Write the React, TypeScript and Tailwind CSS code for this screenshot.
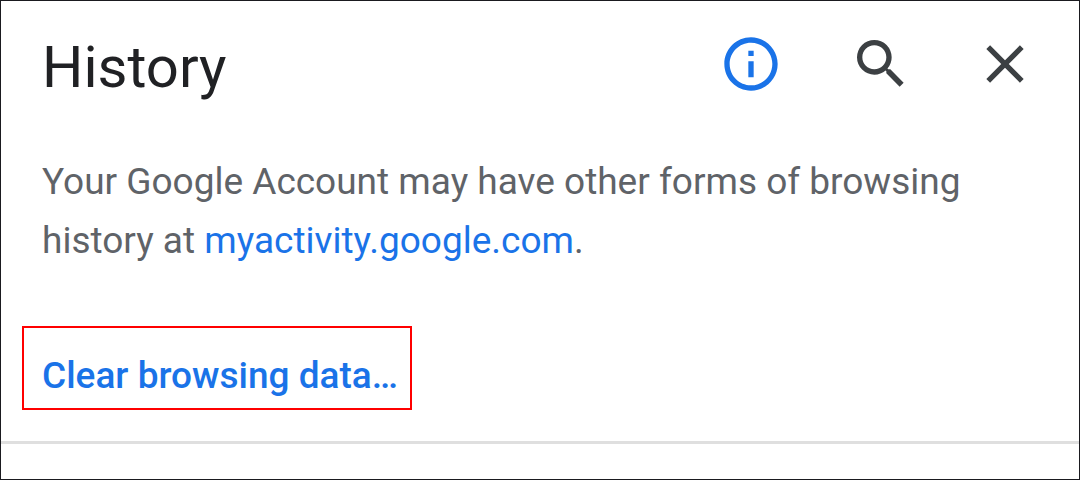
import React from 'react';
import { MdClose, MdInfoOutline, MdSearch } from 'react-icons/md';

interface IconButtonProps {
  label: string;
  className?: string;
  children: React.ReactNode;
}

const IconButton: React.FC<IconButtonProps> = ({ label, className = '', children }) => {
  return (
    <button type="button" aria-label={label} className={`cursor-pointer ${className}`}>
      {children}
    </button>
  );
};

const App: React.FC = () => {
  return (
    <main className="min-h-screen border border-[#1a1a1f] bg-white font-['Roboto',sans-serif]">
      <header className="flex items-start justify-between pt-7 pr-[42px] pl-[41px]">
        <h1 className="text-[58px] leading-[76px] text-[#202124]">History</h1>
        <div className="flex items-center gap-[66px] pt-[3px]">
          <IconButton label="About your history" className="text-[#1a73e8]">
            <MdInfoOutline size={64} />
          </IconButton>
          <div className="flex items-center gap-[60px]">
            <IconButton label="Search history" className="text-[#3c4043]">
              <MdSearch size={64} />
            </IconButton>
            <IconButton label="Close" className="text-[#3c4043]">
              <MdClose size={64} />
            </IconButton>
          </div>
        </div>
      </header>

      <p className="mt-[47px] max-w-[980px] pl-[41px] text-[37px] leading-[59px] text-[#5f6368]">
        Your Google Account may have other forms of browsing history at{' '}
        <a href="https://myactivity.google.com" className="text-[#1a73e8]">
          myactivity.google.com
        </a>
        .
      </p>

      <div className="mt-14 pl-[21px]">
        <button
          type="button"
          className="h-[84px] cursor-pointer border-2 border-[#f00] pt-4 pr-3 pl-[18px] text-[37px] font-medium text-[#1a73e8]"
        >
          Clear browsing data…
        </button>
      </div>
      <hr className="mt-[31px] border-t-[3px] border-[#dfdfdf]" />
    </main>
  );
};

export default App;
